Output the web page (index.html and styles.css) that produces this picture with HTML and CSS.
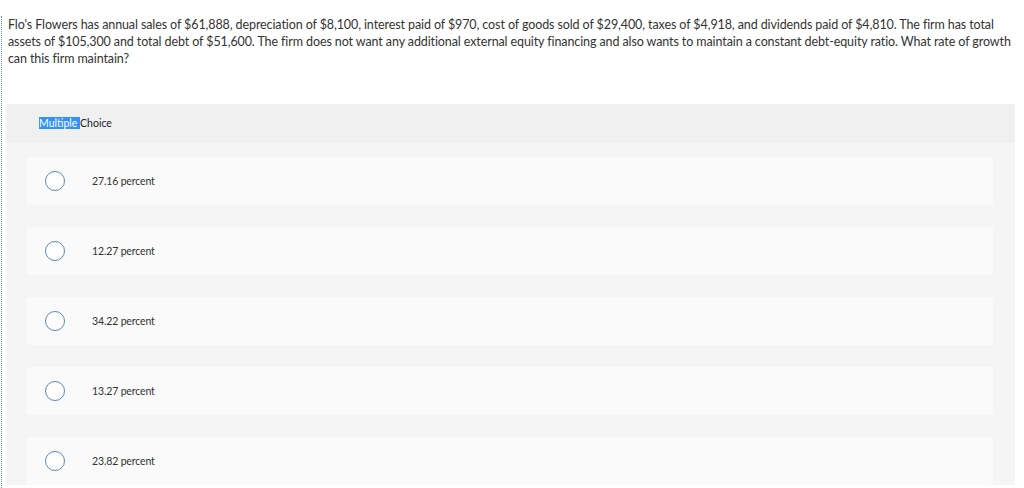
FILE: index.html
```html
<!DOCTYPE html>
<html>
<head>
<meta charset="utf-8">
<link rel="stylesheet" href="styles.css">
</head>
<body>
<div class="frame">
  <p class="question">Flo's Flowers has annual sales of $61,888, depreciation of $8,100, interest paid of $970, cost of goods sold of $29,400, taxes of $4,918, and dividends paid of $4,810. The firm has total<br>assets of $105,300 and total debt of $51,600. The firm does not want any additional external equity financing and also wants to maintain a constant debt-equity ratio. What rate of growth<br>can this firm maintain?</p>
  <section class="panel">
    <header class="panel-head"><span class="sel">Multiple </span>Choice</header>
    <div class="options">
      <div class="option"><span class="radio"></span><span class="label">27.16 percent</span></div>
      <div class="option"><span class="radio"></span><span class="label">12.27 percent</span></div>
      <div class="option"><span class="radio"></span><span class="label">34.22 percent</span></div>
      <div class="option"><span class="radio"></span><span class="label">13.27 percent</span></div>
      <div class="option"><span class="radio"></span><span class="label">23.82 percent</span></div>
    </div>
  </section>
</div>
</body>
</html>
```
FILE: styles.css
```css
html, body {
  margin: 0;
  padding: 0;
  background: #ffffff;
  height: 100%;
  overflow: hidden;
}
body {
  font-family: "Lato", "Liberation Sans", sans-serif;
  color: #333333;
}
.frame {
  margin-left: 1px;
  margin-top: 16px;
  border-left: 1px dotted #6f86b0;
  min-height: 480px;
}
.question {
  margin: 0;
  padding: 0 0 0 6px;
  font-size: 12.5px;
  letter-spacing: -0.1px;
  line-height: 17px;
  white-space: nowrap;
  height: 88px;
}
.panel {
  margin-left: 4px;
  width: 1009px;
  background: #f5f5f5;
}
.panel-head {
  height: 39px;
  box-sizing: border-box;
  background: #f0f0f0;
  padding-left: 33px;
  font-size: 10.5px;
  line-height: 39px;
  color: #222;
}
.sel {
  background: #3390ff;
  color: #ffffff;
}
.options {
  display: flex;
  flex-direction: column;
  gap: 22px;
  padding: 14px 22px 0 20px;
}
.option {
  height: 48px;
  background: #fafafa;
  border-radius: 3px;
  display: flex;
  align-items: center;
  padding-left: 19px;
}
.radio {
  width: 18px;
  height: 18px;
  border: 1.5px solid #5b87b8;
  border-radius: 50%;
  background: #fff;
  flex: none;
}
.label {
  margin-left: 27px;
  font-size: 10.5px;
  letter-spacing: -0.15px;
  color: #333;
}
```
